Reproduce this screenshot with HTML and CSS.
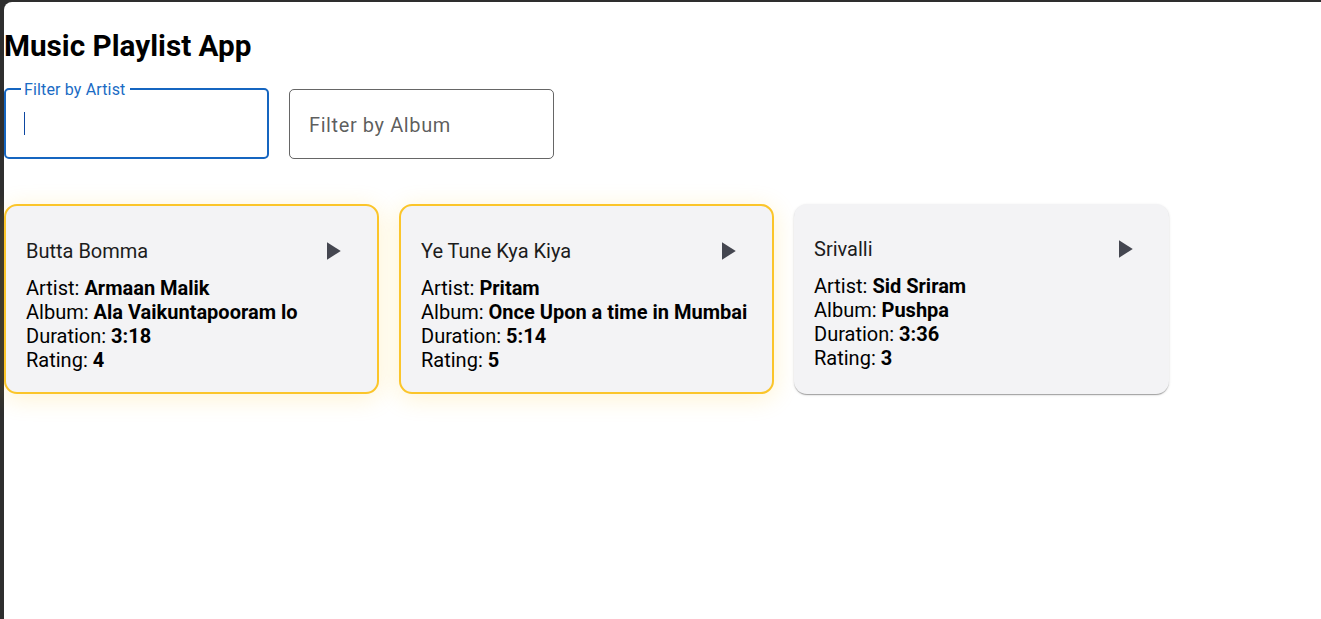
FILE: index.html
```html
<!DOCTYPE html>
<html lang="en">
<head>
<meta charset="utf-8">
<title>Music Playlist App</title>
<link rel="stylesheet" href="styles.css">
</head>
<body>
<div class="window">
  <h1 class="title">Music Playlist App</h1>
  <div class="filters">
    <div class="field focused">
      <fieldset class="outline"><legend><span>Filter by Artist</span></legend></fieldset>
      <label class="label">Filter by Artist</label>
      <span class="caret"></span>
    </div>
    <div class="field">
      <fieldset class="outline"><legend><span>Filter by Album</span></legend></fieldset>
      <label class="label">Filter by Album</label>
    </div>
  </div>
  <div class="cards">
    <div class="card playing">
      <div class="card-head">
        <span class="song">Butta Bomma</span>
        <button class="play" aria-label="play"><svg viewBox="0 0 24 24"><path d="M8 5v14l11-7z"/></svg></button>
      </div>
      <div class="line">Artist: <b>Armaan Malik</b></div>
      <div class="line">Album: <b>Ala Vaikuntapooram lo</b></div>
      <div class="line">Duration: <b>3:18</b></div>
      <div class="line">Rating: <b>4</b></div>
    </div>
    <div class="card playing">
      <div class="card-head">
        <span class="song">Ye Tune Kya Kiya</span>
        <button class="play" aria-label="play"><svg viewBox="0 0 24 24"><path d="M8 5v14l11-7z"/></svg></button>
      </div>
      <div class="line">Artist: <b>Pritam</b></div>
      <div class="line">Album: <b>Once Upon a time in Mumbai</b></div>
      <div class="line">Duration: <b>5:14</b></div>
      <div class="line">Rating: <b>5</b></div>
    </div>
    <div class="card">
      <div class="card-head">
        <span class="song">Srivalli</span>
        <button class="play" aria-label="play"><svg viewBox="0 0 24 24"><path d="M8 5v14l11-7z"/></svg></button>
      </div>
      <div class="line">Artist: <b>Sid Sriram</b></div>
      <div class="line">Album: <b>Pushpa</b></div>
      <div class="line">Duration: <b>3:36</b></div>
      <div class="line">Rating: <b>3</b></div>
    </div>
  </div>
</div>
</body>
</html>
```

FILE: styles.css
```css
html, body {
  margin: 0;
  height: 100%;
}
body {
  background: #2e2e2e;
  font-family: Roboto, "Liberation Sans", sans-serif;
  overflow: hidden;
}
.window {
  margin: 2px 0 0 4px;
  height: calc(100% - 2px);
  background: #fff;
  border-top-left-radius: 8px;
  padding-top: 27px;
  box-sizing: border-box;
}
.title {
  margin: 0 0 26px 0;
  font-size: 29.7px;
  font-weight: 700;
  line-height: 34px;
  color: #000;
}
.filters {
  display: flex;
  gap: 20px;
}
.field {
  position: relative;
  width: 265px;
  height: 70px;
}
.outline {
  position: absolute;
  inset: -6px 0 0 0;
  margin: 0;
  padding: 0 15px;
  border: 1px solid rgba(0, 0, 0, 0.6);
  border-radius: 5px;
  pointer-events: none;
}
.outline legend {
  visibility: hidden;
  height: 12px;
  padding: 0;
  font-size: 16px;
  letter-spacing: 0.15px;
  max-width: 0.01px;
  white-space: nowrap;
}
.outline legend span {
  padding: 0 4px;
}
.focused .outline {
  border: 2px solid #1565c0;
  padding: 0 15px;
}
.focused .outline legend {
  max-width: 100%;
}
.label {
  position: absolute;
  left: 20px;
  top: 24px;
  font-size: 20px;
  line-height: 24px;
  color: rgba(0, 0, 0, 0.65);
  letter-spacing: 0.6px;
}
.focused .label {
  top: -8px;
  font-size: 16px;
  line-height: 18px;
  letter-spacing: 0.15px;
  color: #1a6bc4;
}
.caret {
  position: absolute;
  left: 20px;
  top: 23px;
  width: 1px;
  height: 23px;
  background: #0d47a1;
}
.cards {
  display: flex;
  gap: 20px;
  margin-top: 45px;
}
.card {
  width: 375px;
  box-sizing: border-box;
  padding: 20px;
  background: #f3f3f5;
  border-radius: 13px;
  box-shadow: 0 2px 1px -1px rgba(0,0,0,0.2), 0 1px 1px 0 rgba(0,0,0,0.14), 0 1px 3px 0 rgba(0,0,0,0.12);
  font-size: 20px;
  line-height: 24px;
  color: #000;
}
.card.playing {
  border: 2px solid #fbc52a;
  box-shadow: 0 4px 24px rgba(255, 196, 20, 0.2);
}
.card-head {
  display: flex;
  align-items: center;
  justify-content: space-between;
  height: 50px;
}
.song {
  color: #1c1c1c;
}
.play {
  width: 50px;
  height: 50px;
  padding: 10px;
  border: 0;
  background: transparent;
  display: flex;
}
.play svg {
  width: 30px;
  height: 30px;
  fill: #444650;
}
.line b {
  font-weight: 700;
}
```
